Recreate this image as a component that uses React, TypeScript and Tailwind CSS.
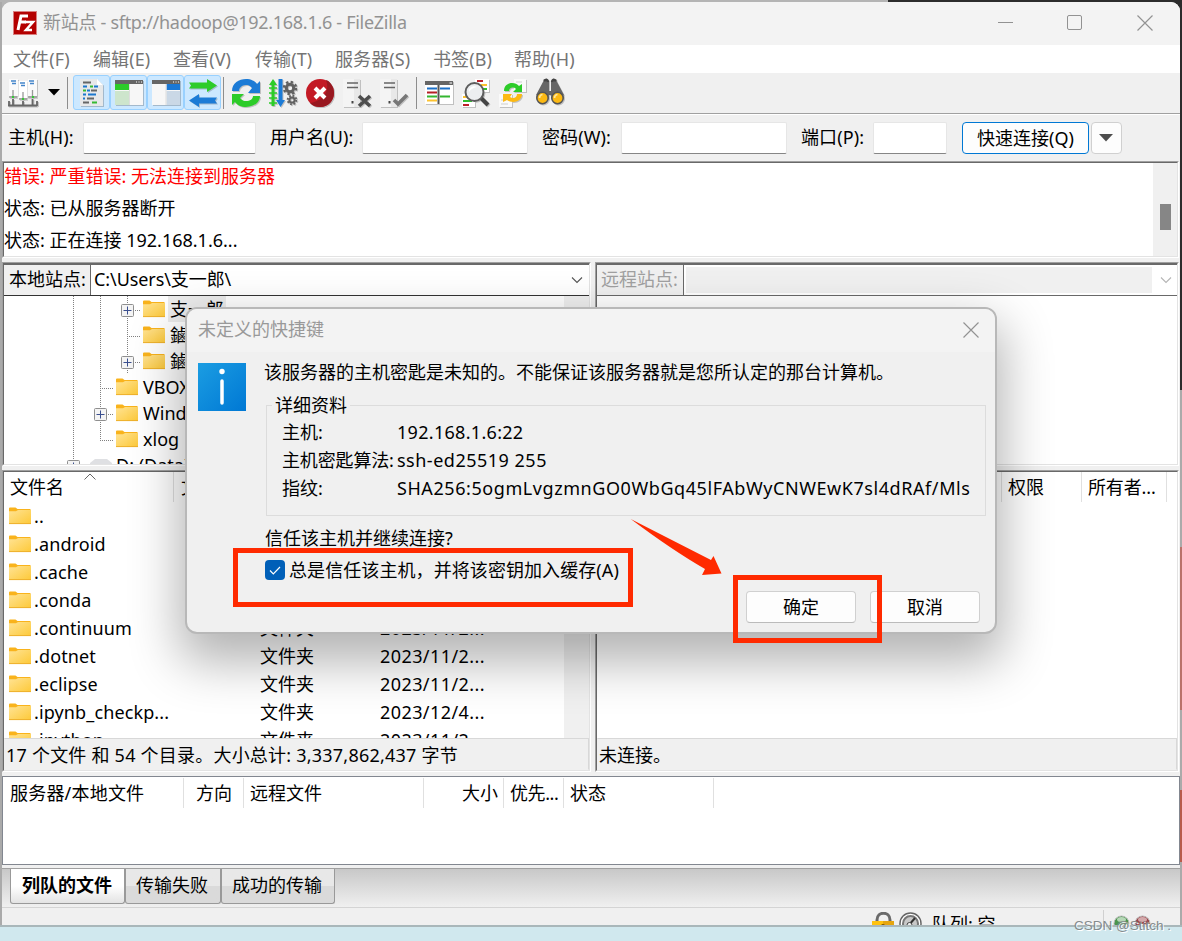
import React from 'react';

/* ---------------- DATA ---------------- */
const MENUS = [
  { label: '文件(F)', width: 'w-[80px]' },
  { label: '编辑(E)', width: 'w-[80px]' },
  { label: '查看(V)', width: 'w-[82px]' },
  { label: '传输(T)', width: 'w-[80px]' },
  { label: '服务器(S)', width: 'w-[98px]' },
  { label: '书签(B)', width: 'w-[81px]' },
  { label: '帮助(H)', width: 'w-[80px]' },
];

const FILES = [
  { name: '..', type: '', date: '' },
  { name: '.android', type: '文件夹', date: '2023/11/2...' },
  { name: '.cache', type: '文件夹', date: '2023/11/2...' },
  { name: '.conda', type: '文件夹', date: '2023/11/2...' },
  { name: '.continuum', type: '文件夹', date: '2023/11/2...' },
  { name: '.dotnet', type: '文件夹', date: '2023/11/2...' },
  { name: '.eclipse', type: '文件夹', date: '2023/11/2...' },
  { name: '.ipynb_checkp...', type: '文件夹', date: '2023/12/4...' },
  { name: '.ipython', type: '文件夹', date: '2023/11/2...' },
];

type Cell = 'line' | 'tee' | 'end' | 'plus' | 'blank';

const TREE: { cells: Cell[]; name: string; selected?: boolean; drive?: boolean }[] = [
  { cells: ['line', 'line', 'plus'], name: '支一郎', selected: true },
  { cells: ['line', 'line', 'tee'], name: '鏀枃浠' },
  { cells: ['line', 'line', 'plus'], name: '鏀枃浠' },
  { cells: ['line', 'tee'], name: 'VBOX' },
  { cells: ['line', 'plus'], name: 'Windows' },
  { cells: ['line', 'end'], name: 'xlog' },
  { cells: ['plus'], name: 'D: (Data)', drive: true },
];

/* ---------------- SHARED PIECES ---------------- */
const Sunken: React.FC<{ className?: string; children: React.ReactNode }> = ({ className, children }) => (
  <div className={`border border-t-[#a0a0a0] border-l-[#a0a0a0] border-r-white border-b-white ${className}`}>
    <div className="flex h-full w-full flex-col overflow-hidden border border-t-[#696969] border-l-[#696969] border-r-[#e3e3e3] border-b-[#e3e3e3]">
      {children}
    </div>
  </div>
);

const Folder = () => (
  <svg width="22" height="18" viewBox="0 0 22 18" className="shrink-0">
    <defs>
      <linearGradient id="folder" x1="0" y1="0" x2="1" y2="1">
        <stop offset="0" stopColor="#ffe394" />
        <stop offset="1" stopColor="#fdc938" />
      </linearGradient>
    </defs>
    <path d="M0 1.5Q0 .5 1 .5H6.5L8.5 2H21.5V5H0Z" fill="#f9b31c" />
    <path d="M0 4.3H7L9 3H22V17H0Z" fill="url(#folder)" />
    <path d="M0 16.6H22" stroke="#eeb02c" />
  </svg>
);

const Chevron: React.FC<{ color: string }> = ({ color }) => (
  <svg width="12" height="8" viewBox="0 0 12 8" fill="none" stroke={color} strokeWidth="1.1">
    <path d="M1 1.5L6 6.5L11 1.5" />
  </svg>
);

const Close = () => (
  <svg width="16" height="16" viewBox="0 0 16 16" stroke="#929292" strokeWidth="1.2">
    <path d="M.5 .5L15.5 15.5M15.5 .5L.5 15.5" />
  </svg>
);

const TreeCell: React.FC<{ kind: Cell }> = ({ kind }) => (
  <svg width="27" height="26" viewBox="0 0 27 26" className="shrink-0">
    <g stroke="#808080" strokeDasharray="1 1" fill="none">
      {kind !== 'blank' && <path d={kind === 'end' ? 'M13.5 0V14' : 'M13.5 0V26'} />}
      {(kind === 'tee' || kind === 'end' || kind === 'plus') && <path d="M13 14.5H27" />}
    </g>
    {kind === 'plus' && (
      <g>
        <rect x="7.5" y="8.5" width="12" height="12" rx="1" fill="#f4f4f4" stroke="#8f8f8f" />
        <path d="M9.5 14.5H17.5M13.5 10.5V18.5" stroke="#3a4f8f" />
      </g>
    )}
  </svg>
);

const Separator = () => <div className="h-8 w-px bg-[#8d8d8d]" />;

/* ---------------- TOOLBAR ICONS ---------------- */
const Icon: React.FC<{ children: React.ReactNode }> = ({ children }) => (
  <svg width="30" height="30" viewBox="0 0 30 30" fill="none" className="drop-shadow-[1px_1px_0.5px_rgba(0,0,0,0.2)]">
    {children}
  </svg>
);

const SiteManagerIcon = () => (
  <Icon>
    <path d="M1 1H10V18H1ZM20 1H29V18H20Z" fill="#fafafa" />
    <path d="M10.500 3H19.500V20H10.500Z" fill="#fff" />
    <path d="M3 3H8M4 5.500H8M12 5H17M13 7.500H17M21 3H26M22 5.500H26" stroke="#4385ca" strokeWidth="1.300" />
    <path d="M5 12V20M15 14V22M24.500 12V20M1 19H9M11 21H19M20 19H29" stroke="#999" strokeWidth="1.300" />
    <path d="M5 21V28M15 23V28M24.500 21V28M1 23V28M29 23V28M0 27.500H29" stroke="#666" strokeWidth="1.800" />
    <path d="M4 18H6V20H4ZM14 20H16V22H14ZM24 18H26V20H24Z" fill="#35c735" />
  </Icon>
);

const LogIcon = () => (
  <Icon>
    <path d="M3 1H20L26 7V28H3Z" fill="#e7e8e9" />
    <path d="M20 1V7H26" fill="#fff" />
    <g strokeWidth="2">
      <path d="M6 4.500H14M14 12.500H20M10 20.500H17M6 24.500H12" stroke="#666" />
      <path d="M13 8.500H16M6 12.500H9M15 24.500H20" stroke="#35ba32" />
      <path d="M6 8.500H10M17 8.500H21M10 12.500H13M6 16.500H9M11 16.500H19M6 20.500H8" stroke="#1c77ce" />
    </g>
  </Icon>
);

const LocalTreeIcon = () => (
  <Icon>
    <path d="M1 3H29V27H1Z" fill="#f7f7f7" />
    <path d="M1 2H29V6H1Z" fill="#666" />
    <path d="M22 4H23M24.500 4H25.500M27 4H28" stroke="#fff" />
    <path d="M1 6H15V12H1Z" fill="#2ccb29" />
    <path d="M1 13H15V27H1Z" fill="#cde5cc" />
    <path d="M15.500 6V27" stroke="#ddd" />
  </Icon>
);

const RemoteTreeIcon = () => (
  <Icon>
    <path d="M1 3H29V27H1Z" fill="#f7f7f7" />
    <path d="M1 2H29V6H1Z" fill="#666" />
    <path d="M22 4H23M24.500 4H25.500M27 4H28" stroke="#fff" />
    <path d="M15.500 6H29V12H15.500Z" fill="#1b78d5" />
    <path d="M15.500 13H29V27H15.500Z" fill="#cad8e6" />
    <path d="M15 6V27" stroke="#ddd" />
  </Icon>
);

const QueueIcon = () => (
  <Icon>
    <path d="M1 4.500H19V1L29 7.500L19 14V10.500H1L3 7.500Z" fill="#2dcc29" />
    <path d="M29 19.500H11V16L1 22.500L11 29V25.500H29L27 22.500Z" fill="#1c7bd6" />
  </Icon>
);

const RefreshIcon = () => (
  <Icon>
    <path d="M1 13C1 5 8 1 15 1C20 1 24 3 26 6L29 3V15H17L21 10C19 7.500 17 7 15 7C11 7 8 10 8 13Z" fill="#1c7bd6" />
    <path d="M29 18C29 25 22 29 15 29C10 29 6 27 4 24L1 27V16H13L9 20C11 22.500 13 23 15 23C19 23 22 21 22 18Z" fill="#2dcc29" />
  </Icon>
);

const ProcessIcon = () => (
  <Icon>
    <path d="M3.500 28V7H1L5 1L9 7H6.500V28Z" fill="#2dcc29" />
    <path d="M1 10H9M1 15H9M1 20H9M1 25H9" stroke="#2dcc29" strokeWidth="1.500" />
    <path d="M10.500 1V22H8L12.500 29L17 22H14.500V1Z" fill="#1c7bd6" />
    <circle cx="22" cy="10" r="3.700" stroke="#606060" strokeWidth="3" />
    <circle cx="22" cy="10" r="6" stroke="#606060" strokeWidth="2.500" strokeDasharray="2.400 2.300" />
    <circle cx="24" cy="22" r="2.600" stroke="#606060" strokeWidth="2" />
    <circle cx="24" cy="22" r="4.300" stroke="#606060" strokeWidth="2" strokeDasharray="1.700 1.670" />
  </Icon>
);

const CancelIcon = () => (
  <Icon>
    <circle cx="15" cy="15" r="14" fill="#c31a25" />
    <path d="M15 29C24 29 29 22 29 15C29 9 25 3 21 2C26 15 15 24 5 25C8 28 11 29 15 29Z" fill="#981820" />
    <path d="M10 10L20 20M20 10L10 20" stroke="#fff" strokeWidth="4" />
  </Icon>
);

const DisconnectIcon = () => (
  <Icon>
    <path d="M1 1H18V29H1Z" fill="#e8e8e8" />
    <path d="M1 1H12V29H1Z" fill="#f4f4f4" />
    <path d="M5 5H16M5 9.500H16" stroke="#666" strokeWidth="1.700" />
    <path d="M9.500 23H11.500V25.500H9.500Z" fill="#444" />
    <path d="M17 18L28 28M28 18L17 28" stroke="#4d4d4d" strokeWidth="3.600" />
  </Icon>
);

const ReconnectIcon = () => (
  <Icon>
    <path d="M1 1H18V29H1Z" fill="#e8e8e8" />
    <path d="M1 1H12V29H1Z" fill="#f4f4f4" />
    <path d="M5 5H16M5 9.500H16" stroke="#666" strokeWidth="1.700" />
    <path d="M9.500 23H11.500V25.500H9.500Z" fill="#444" />
    <path d="M15 22L19 26L28 17" stroke="#777" strokeWidth="3.600" />
  </Icon>
);

const FilterIcon = () => (
  <Icon>
    <path d="M1 4H29V26H1Z" fill="#fff" />
    <path d="M1 5H29" stroke="#666" strokeWidth="4" />
    <path d="M25.500 5H28" stroke="#fff" />
    <path d="M3 10.500H13M16 10.500H26" stroke="#1c70c7" strokeWidth="2" />
    <path d="M3 14.500H13" stroke="#b51f25" strokeWidth="2" />
    <path d="M3 18.500H13M16 18.500H26" stroke="#34b630" strokeWidth="2" />
    <path d="M3 22.500H13" stroke="#fcc22f" strokeWidth="2" />
    <path d="M14.500 7V26" stroke="#555" strokeWidth="2" />
  </Icon>
);

const CompareIcon = () => (
  <Icon>
    <path d="M14 1H28V14H14ZM1 16H14V29H1Z" fill="#fff" />
    <path d="M16 3H22M2 27H8" stroke="#bd2028" strokeWidth="2" />
    <path d="M20 7H26M2 19H7" stroke="#fcc22f" strokeWidth="2" />
    <path d="M22 11H26M2 23H11" stroke="#2fbf2d" strokeWidth="2" />
    <path d="M20 20L27 27" stroke="#444" strokeWidth="4" />
    <circle cx="13.500" cy="14" r="9" fill="#eceef0" stroke="#5d5d5d" strokeWidth="2" />
    <path d="M8 14C7 10 12 7 16 9C12 10 10 11 8 14Z" fill="#fff" />
  </Icon>
);

const SyncIcon = () => (
  <Icon>
    <path d="M16 1H28V14H16ZM1 16H14V29H1Z" fill="#fafafa" />
    <path d="M18 4H24M3 22H8M3 26H10" stroke="#ddd" strokeWidth="1.500" />
    <path d="M6 13C6 4 17 3 21 8L24 6V14H15L18 11C15 8 11 10 11 13Z" fill="#2dcc29" />
    <path d="M24 16C24 24 14 26 9 22L5 24V16H14L12 19C15 21 19 20 19 16Z" fill="#fcb913" />
  </Icon>
);

const SearchIcon = () => (
  <Icon>
    <path d="M1 17L9 2Q12 0 14 3V13H16V3Q18 0 21 2L29 17L20 24L16 17H14L10 24Z" fill="#666" />
    <path d="M9 3Q12 0 13 4M17 4Q18 0 21 3" stroke="#444" strokeWidth="2.500" />
    <circle cx="7.500" cy="20" r="5.700" fill="#fcb913" stroke="#555" strokeWidth="1.600" />
    <circle cx="22.500" cy="20" r="5.700" fill="#fcb913" stroke="#555" strokeWidth="1.600" />
    <path d="M4.500 20Q4.500 17 7.500 16.500M19.500 20Q19.500 17 22.500 16.500" stroke="#ffe89d" strokeWidth="1.700" />
  </Icon>
);

const Toggled: React.FC<{ children: React.ReactNode }> = ({ children }) => (
  <div className="flex h-[35px] w-[37px] items-center justify-center rounded-[3px] border border-[#99d1ff] bg-[#cce8ff]">
    {children}
  </div>
);

/* ---------------- WINDOW BARS ---------------- */
const TitleBar = () => (
  <div className="flex h-[43px] shrink-0 items-center bg-[#f3f3f3] pr-[27px] pb-[2px] pl-[11px] text-[#929292]">
    <svg width="24" height="24" viewBox="0 0 24 24" fill="none" className="mt-px">
      <rect width="24" height="24" fill="#b40000" />
      <rect x=".5" y=".5" width="23" height="23" stroke="#fff" strokeDasharray="1 1" />
      <path d="M5 19L8 5H15M7 11H13" stroke="#fff" strokeWidth="3" />
      <path d="M12 11H20L13 19H19" stroke="#fff" strokeWidth="2.500" />
    </svg>
    <span className="ml-[6px] tracking-[-0.29px]">新站点 - sftp://hadoop@192.168.1.6 - FileZilla</span>
    <div className="ml-auto flex items-center">
      <div className="mr-[54px] h-px w-[15px] bg-[#929292]" />
      <div className="mr-[55px] h-[15px] w-[15px] rounded-[2px] border border-[#929292]" />
      <Close />
    </div>
  </div>
);

const ToolBar = () => (
  <div className="flex h-[42px] shrink-0 items-center border-b border-white pb-[2px] pl-[6px] shadow-[inset_0_-1px_0_#a0a0a0]">
    <SiteManagerIcon />
    <svg width="12" height="7" viewBox="0 0 12 7" className="ml-[10px]">
      <path d="M0 0H12L6 6.500Z" fill="#000" />
    </svg>
    <div className="mr-[5px] ml-[7px]"><Separator /></div>
    <Toggled><LogIcon /></Toggled>
    <Toggled><LocalTreeIcon /></Toggled>
    <Toggled><RemoteTreeIcon /></Toggled>
    <Toggled><QueueIcon /></Toggled>
    <div className="mr-[7px] ml-[2px]"><Separator /></div>
    <div className="flex gap-[7px]">
      <RefreshIcon />
      <ProcessIcon />
      <CancelIcon />
      <DisconnectIcon />
      <ReconnectIcon />
    </div>
    <div className="mx-[7px]"><Separator /></div>
    <div className="flex gap-[7px]">
      <FilterIcon />
      <CompareIcon />
      <SyncIcon />
      <SearchIcon />
    </div>
  </div>
);

const Field: React.FC<{ label: string; labelWidth: string; inputWidth: string }> = ({ label, labelWidth, inputWidth }) => (
  <>
    <label className={`shrink-0 pb-[2px] tracking-[0.1px] whitespace-nowrap ${labelWidth}`}>{label}</label>
    <div className={`h-8 shrink-0 rounded-[2px] border border-[#e6e6e6] border-b-[#868686] bg-white ${inputWidth}`} />
  </>
);

const QuickConnect = () => (
  <div className="flex h-[46px] shrink-0 items-center pl-[6px]">
    <Field label="主机(H):" labelWidth="w-[75px]" inputWidth="w-[173px] mr-[14px]" />
    <Field label="用户名(U):" labelWidth="w-[92px]" inputWidth="w-[166px] mr-[14px]" />
    <Field label="密码(W):" labelWidth="w-[79px]" inputWidth="w-[166px] mr-[14px]" />
    <Field label="端口(P):" labelWidth="w-[72px]" inputWidth="w-[74px] mr-[15px]" />
    <button className="h-8 w-[127px] rounded-[4px] border border-[#0078d4] bg-[#fdfdfd] whitespace-nowrap">快速连接(Q)</button>
    <button className="ml-[2px] flex h-8 w-[31px] items-center justify-center rounded-[4px] border border-[#d0d0d0] bg-[#fdfdfd] pr-[2px]">
      <svg width="14" height="8" viewBox="0 0 14 8"><path d="M0 0H14L7 7.500Z" fill="#4d4d4d" /></svg>
    </button>
  </div>
);

/* ---------------- PANES ---------------- */
const MessageLog = () => (
  <Sunken className="h-[97px] w-[1177px] shrink-0">
    <div className="flex h-full bg-white">
      <div className="flex-1">
        <p className="h-8 leading-[26px] text-[#f00]">错误: 严重错误: 无法连接到服务器</p>
        <p className="h-8 leading-[26px]">状态: 已从服务器断开</p>
        <p className="h-8 leading-[26px]">状态: 正在连接 192.168.1.6...</p>
      </div>
      <div className="w-[24px] bg-[#f0f0f0] pt-[41px] pl-[7px]">
        <div className="h-[26px] w-[11px] bg-[#868686]" />
      </div>
    </div>
  </Sunken>
);

const Tree = () => (
  <div className="flex flex-1 overflow-hidden bg-white">
    <div className="flex-1 pl-[56px]">
      {TREE.map((node, i) => (
        <div key={i} className="flex h-[26px] items-center">
          {node.cells.map((kind, j) => <TreeCell key={j} kind={kind} />)}
          <div className="ml-[2px] flex w-[25px] shrink-0">
            {node.drive ? (
              <svg width="24" height="18" viewBox="0 0 24 18"><path d="M1 7L6 3H18L23 7V17H1Z" fill="#dfe0e3" /></svg>
            ) : <Folder />}
          </div>
          <span className={`h-[26px] px-[2px] leading-[27px] whitespace-nowrap ${node.selected ? 'bg-[#ececec]' : ''}`}>
            {node.name}
          </span>
        </div>
      ))}
    </div>
    <div className="w-[25px] bg-[#f0f0f0]" />
  </div>
);

const FileList = () => (
  <div className="flex flex-1 overflow-hidden bg-white">
    <div className="flex-1">
      <div className="relative flex h-[30px] leading-[30px]">
        <div className="w-[170px] border-r border-[#e0e0e0] pl-[6px]">文件名</div>
        <div className="w-[79px] border-r border-[#e0e0e0] pl-[7px] whitespace-nowrap">文件大小</div>
        <div className="w-[120px] border-r border-[#e0e0e0] pl-[7px]">文件类型</div>
        <div className="pl-[7px]">最近修改</div>
        <svg width="12" height="7" viewBox="0 0 12 7" fill="none" stroke="#666" className="absolute top-px left-[80px]">
          <path d="M.5 6.500L6 1L11.500 6.500" />
        </svg>
      </div>
      {FILES.map((file) => (
        <div key={file.name} className="flex h-7 items-center pl-[5px] leading-7">
          <Folder />
          <span className="w-[229px] pl-[3px] tracking-[0.12px]">{file.name}</span>
          <span className="w-[120px]">{file.type}</span>
          <span className="tracking-[0.42px]">{file.date}</span>
        </div>
      ))}
    </div>
    <div className="w-[25px] bg-[#f0f0f0]" />
  </div>
);

const LocalSide = () => (
  <div className="flex w-[589px] flex-col gap-1">
    <Sunken className="h-[204px]">
      <div className="flex h-[32px] shrink-0 border-t border-b border-t-[#696969] border-b-[#333]">
        <div className="w-[87px] border-r border-[#696969] bg-[#f0f0f0] pl-[5px] leading-[29px] whitespace-nowrap">本地站点:</div>
        <div className="flex flex-1 items-center justify-between bg-white pr-[6px] pl-[3px]">
          <span className="pb-px leading-[29px] tracking-[-0.08px]">C:\Users\支一郎\</span>
          <Chevron color="#555" />
        </div>
      </div>
      <Tree />
    </Sunken>
    <Sunken className="h-[302px]">
      <FileList />
      <div className="h-[32px] shrink-0 border border-transparent border-t-[#d8d8d8] border-r-[#d8d8d8] bg-[#f0f0f0] pl-px leading-[33px] tracking-[0.22px] whitespace-nowrap">
        17 个文件 和 54 个目录。大小总计: 3,337,862,437 字节
      </div>
    </Sunken>
  </div>
);

const RemoteSide = () => (
  <div className="ml-1 flex w-[584px] flex-col gap-1">
    <Sunken className="h-[204px]">
      <div className="flex h-[32px] shrink-0 border-t border-b border-[#696969]">
        <div className="w-[87px] border-r border-[#696969] bg-[#f0f0f0] pl-[4px] leading-[29px] whitespace-nowrap text-[#a0a0a0]">远程站点:</div>
        <div className="flex flex-1 items-center bg-white pr-[5px] pl-[2px]">
          <div className="mr-[8px] h-[26px] flex-1 bg-[#f0f0f0]" />
          <Chevron color="#b5b5b5" />
        </div>
      </div>
      <div className="flex-1 bg-white" />
    </Sunken>
    <Sunken className="h-[302px]">
      <div className="flex-1 bg-white">
        <div className="flex h-[30px] justify-end pr-[10px] leading-[31px]">
          <div className="w-[80px] border-l border-[#e0e0e0] pl-[6px]">权限</div>
          <div className="w-[86px] border-x border-[#e0e0e0] pl-[6px] tracking-[-0.15px]">所有者...</div>
        </div>
      </div>
      <div className="h-[32px] shrink-0 border border-transparent border-t-[#d8d8d8] border-r-[#d8d8d8] bg-[#f0f0f0] pl-px leading-[33px]">未连接。</div>
    </Sunken>
  </div>
);

const Queue = () => (
  <div className="h-[89px] w-[1178px] shrink-0 border border-[#828790] bg-white pt-px">
    <div className="flex h-[30px] leading-[31px] whitespace-nowrap">
      <div className="w-[181px] border-r border-[#e0e0e0] pl-[7px] tracking-[0.2px]">服务器/本地文件</div>
      <div className="w-[60px] border-r border-[#e0e0e0] pr-[11px] text-right">方向</div>
      <div className="w-[180px] border-r border-[#e0e0e0] pl-[6px]">远程文件</div>
      <div className="w-[80px] border-r border-[#e0e0e0] pr-[5px] text-right">大小</div>
      <div className="w-[60px] border-r border-[#e0e0e0] pl-[6px] tracking-[-0.4px]">优先...</div>
      <div className="w-[150px] border-r border-[#e0e0e0] pl-[6px]">状态</div>
    </div>
  </div>
);

const Tabs = () => (
  <div className="mt-[3px] flex h-[40px] shrink-0 border-t border-b border-t-[#a0a0a0] border-b-[#d4d4d4] bg-linear-to-b from-[#c8c8c8] to-[#f0f0f0] pl-[8px] leading-[32px]">
    <div className="h-[35px] w-[115px] rounded-b-[3px] border border-t-0 border-[#999] bg-linear-to-b from-white from-50% to-[#e3e3e3] pr-px text-center font-bold">列队的文件</div>
    <div className="h-[35px] w-[96px] rounded-b-[3px] border border-t-0 border-[#999] bg-linear-to-b from-[#e8e8e8] from-50% to-[#dadada] to-50% pr-[2px] text-center">传输失败</div>
    <div className="h-[35px] w-[114px] rounded-b-[3px] border border-t-0 border-[#999] bg-linear-to-b from-[#e8e8e8] from-50% to-[#dadada] to-50% pr-[2px] text-center">成功的传输</div>
  </div>
);

const StatusBar = () => (
  <div className="flex h-[17px] shrink-0 items-start overflow-hidden pl-[870px]">
    <svg width="24" height="24" viewBox="0 0 24 24" className="mt-[4px] shrink-0" fill="none">
      <path d="M5 10V8C5 -1 18 -1 18 8V10" stroke="#6a6a6a" strokeWidth="3" />
      <path d="M0 9H11V24H0Z" fill="#ffc20f" />
      <path d="M11 9H22V24H11Z" fill="#e5a50f" />
      <circle cx="11" cy="14" r="2" fill="#7b5600" />
    </svg>
    <svg width="24" height="24" viewBox="0 0 24 24" className="mt-[4px] ml-[3px] shrink-0" fill="none">
      <circle cx="11.500" cy="11.500" r="10.500" fill="#fff" stroke="#666" strokeWidth="1.500" />
      <circle cx="11.500" cy="11.500" r="7.500" fill="#c8c8c8" stroke="#777" strokeWidth="2" />
      <path d="M10 13L16 6" stroke="#333" strokeWidth="2" />
      <circle cx="10.500" cy="13" r="2.500" fill="#eee" stroke="#444" />
    </svg>
    <span className="mt-[3px] ml-[9px] w-[171px] leading-[26px]">队列: 空</span>
    <div className="mt-[2px] h-[15px] w-px shrink-0 bg-[#d0d0d0]" />
    <svg width="38" height="18" viewBox="0 0 38 18" className="mt-[7px] ml-[9px] shrink-0">
      <circle cx="8.500" cy="8.500" r="7.500" fill="#4a954d" stroke="#bbb" />
      <ellipse cx="8.500" cy="4.500" rx="4.500" ry="2.500" fill="#b6d8b7" />
      <circle cx="29.500" cy="8.500" r="7.500" fill="#9a4449" stroke="#bbb" />
      <ellipse cx="29.500" cy="4.500" rx="4.500" ry="2.500" fill="#d4a9ab" />
    </svg>
  </div>
);

/* ---------------- HOST KEY DIALOG ---------------- */
const HostKeyDialog = () => (
  <div className="absolute top-[307px] left-[185px] flex h-[327px] w-[812px] flex-col overflow-hidden rounded-[12px] border-2 border-[#b8b8b8] bg-[#f0f0f0] shadow-[0_22px_50px_6px_rgba(0,0,0,0.3)]">
    <div className="flex h-[43px] shrink-0 items-center justify-between bg-[#f3f3f3] pr-[16px] pb-[2px] pl-[11px] text-[#999]">
      <span>未定义的快捷键</span>
      <Close />
    </div>
    <div className="flex pt-[11px] pr-[9px] pl-[11px]">
      <svg width="48" height="48" viewBox="0 0 48 48" className="shrink-0">
        <defs>
          <linearGradient id="info" x1="0" y1="0" x2="1" y2="1">
            <stop offset="0" stopColor="#1b9de2" />
            <stop offset="1" stopColor="#0078d4" />
          </linearGradient>
        </defs>
        <rect width="48" height="48" fill="url(#info)" />
        <circle cx="24" cy="8.500" r="2.700" fill="#fff" />
        <path d="M24 18V40" stroke="#fff" strokeWidth="3.500" strokeLinecap="round" />
      </svg>
      <div className="ml-[18px] flex-1">
        <p className="h-[31px] leading-[18px] whitespace-nowrap">该服务器的主机密匙是未知的。不能保证该服务器就是您所认定的那台计算机。</p>
        <fieldset className="ml-[2px] h-[122px] border border-[#dcdcdc] pl-[15px]">
          <legend className="-ml-[10px] px-[3px] leading-[22px]">详细资料</legend>
          <div className="grid grid-cols-[115px_auto] pt-[2px] leading-7 whitespace-nowrap">
            <span>主机:</span>
            <span className="tracking-[0.3px]">192.168.1.6:22</span>
            <span className="tracking-[-0.15px]">主机密匙算法:</span>
            <span className="tracking-[0.5px]">ssh-ed25519 255</span>
            <span>指纹:</span>
            <span className="tracking-[0.57px]">SHA256:5ogmLvgzmnGO0WbGq45lFAbWyCNWEwK7sl4dRAf/Mls</span>
          </div>
        </fieldset>
        <p className="mt-[10px] pl-px leading-[24px]">信任该主机并继续连接?</p>
        <label className="mt-[8px] flex h-[24px] items-center pl-px leading-6 tracking-[0.08px]">
          <span className="mr-[4px] flex h-5 w-5 items-center justify-center rounded-[4px] bg-[#005fb8]">
            <svg width="12" height="9" viewBox="0 0 12 9" fill="none" stroke="#fff" strokeWidth="1.200"><path d="M1 4.500L4.300 7.800L11 1" /></svg>
          </span>
          总是信任该主机，并将该密钥加入缓存(A)
        </label>
      </div>
    </div>
    <div className="mt-[9px] flex justify-end gap-[14px] pr-[15px]">
      <button className="h-8 w-[110px] rounded-[4px] border border-[#d0d0d0] border-b-[#bbb] bg-[#fdfdfd]">确定</button>
      <button className="h-8 w-[110px] rounded-[4px] border border-[#d0d0d0] border-b-[#bbb] bg-[#fdfdfd]">取消</button>
    </div>
  </div>
);

/* ---------------- APP ---------------- */
const App = () => (
  <div className="relative flex h-[941px] w-[1182px] flex-col overflow-hidden bg-[#d0e8ee] font-['Noto_Sans','Noto_Sans_CJK_SC',sans-serif] text-[18px] text-black">
    <div className="flex h-[925px] shrink-0 flex-col bg-[linear-gradient(to_right,#b4b4b4_888px,#2c2c2c_888px)] pt-[2px]">
      <div className="flex h-[923px]">
        <div className="w-[2px] bg-[#aaa]" />
        <div className="flex w-[1178px] flex-col overflow-hidden rounded-t-[9px] bg-[#f0f0f0]">
          <TitleBar />
          <div className="flex h-7 shrink-0 items-center bg-white pl-[11px] tracking-[0.1px] whitespace-nowrap text-[#757575]">
            {MENUS.map((menu) => <span key={menu.label} className={menu.width}>{menu.label}</span>)}
          </div>
          <ToolBar />
          <QuickConnect />
          <MessageLog />
          <div className="mt-1 mb-1 flex shrink-0">
            <LocalSide />
            <RemoteSide />
          </div>
          <Queue />
          <Tabs />
          <StatusBar />
        </div>
        <div className="flex w-[2px] flex-col">
          <div className="h-[388px] bg-[#2c2c2c]" />
          <div className="h-[157px] bg-[#aaa]" />
          <div className="h-[163px] bg-[#b9726a]" />
          <div className="h-[80px] bg-[#aaa]" />
          <div className="h-[72px] bg-[#b85b4b]" />
          <div className="flex-1 bg-[#aaa]" />
        </div>
      </div>
    </div>
    <div className="h-[2px] shrink-0 bg-[#a9b7ba]" />
    <HostKeyDialog />

    {/* annotations */}
    <div className="absolute top-[548px] left-[233px] h-[59px] w-[400px] border-[5px] border-[#ff2a00]" />
    <div className="absolute top-[575px] left-[733px] h-[68px] w-[149px] border-[5px] border-[#ff2a00]" />
    <svg width="92" height="58" viewBox="0 0 92 58" className="absolute top-[518px] left-[630px]">
      <path d="M.7 1L81 42L83.500 38L91.500 55.500L72 57L75 51Q42 32 .7 1Z" fill="#ff2a00" />
    </svg>
    <div className="absolute top-[916px] left-[1074px] font-['Liberation_Sans',sans-serif] text-[13.5px] leading-[20px] whitespace-nowrap text-[#858b8d] [text-shadow:1px_1px_0_#fff]">
      CSDN @Stitch .
    </div>
  </div>
);

export default App;
